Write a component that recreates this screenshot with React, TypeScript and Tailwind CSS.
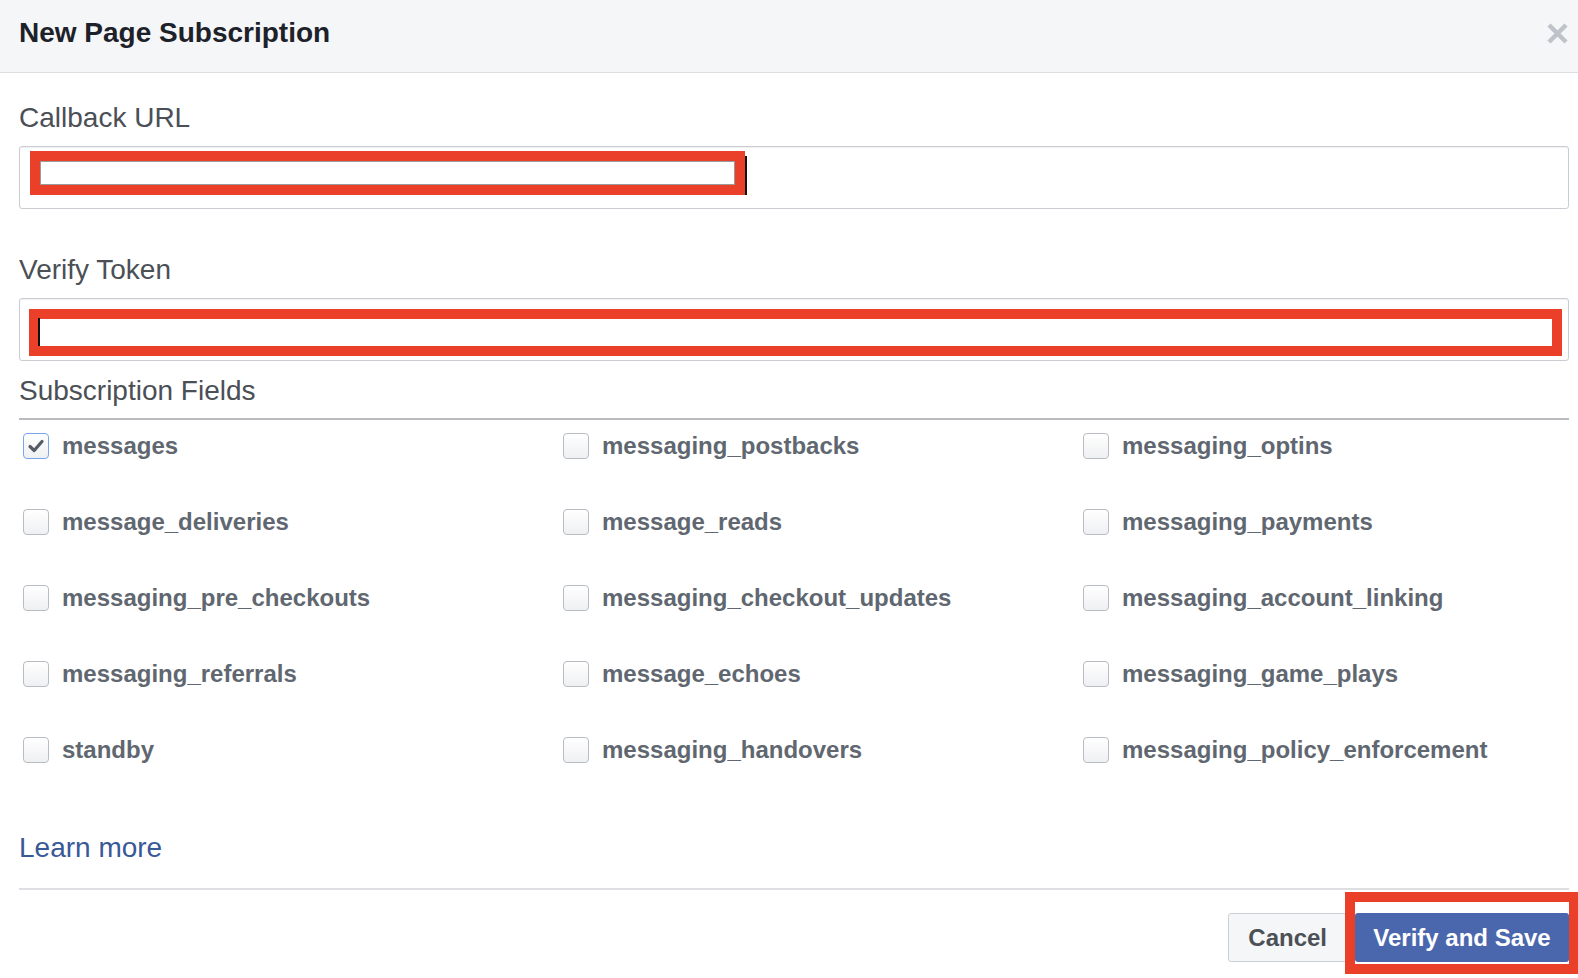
import React from "react";

const fields: [string, boolean][] = [
  ["messages", true],
  ["messaging_postbacks", false],
  ["messaging_optins", false],
  ["message_deliveries", false],
  ["message_reads", false],
  ["messaging_payments", false],
  ["messaging_pre_checkouts", false],
  ["messaging_checkout_updates", false],
  ["messaging_account_linking", false],
  ["messaging_referrals", false],
  ["message_echoes", false],
  ["messaging_game_plays", false],
  ["standby", false],
  ["messaging_handovers", false],
  ["messaging_policy_enforcement", false],
];

function Checkbox({ checked }: { checked: boolean }) {
  return (
    <div
      className={
        "w-[26px] h-[26px] shrink-0 rounded-[4px] border bg-gradient-to-b from-white to-[#eff0f2] flex items-center justify-center " +
        (checked ? "border-[#7aa5ee]" : "border-[#b9bdc3]")
      }
    >
      {checked && (
        <svg width="20" height="20" viewBox="0 0 20 20">
          <path d="M4 10.5 L8.2 14.5 L16 5.5" fill="none" stroke="#555b66" strokeWidth="3.2" strokeLinecap="round" strokeLinejoin="round" />
        </svg>
      )}
    </div>
  );
}

export default function App() {
  return (
    <div
      className="w-[1578px] h-[978px] overflow-hidden bg-white"
      style={{ fontFamily: '"Liberation Sans", Arial, Helvetica, sans-serif' }}
    >
      <div className="h-[73px] bg-[#f5f6f7] border-b border-[#dddfe2] flex items-start justify-between pl-[19px] pr-[10px] pt-[15px]">
        <div className="text-[28px] leading-[36px] font-bold text-[#1d2129]">New Page Subscription</div>
        <svg width="21" height="21" viewBox="0 0 21 21" className="mt-[8px]">
          <path d="M2 2 L19 19 M19 2 L2 19" stroke="#bec2c9" strokeWidth="4.5" strokeLinecap="butt" />
        </svg>
      </div>

      <div className="pl-[19px] pr-[9px]">
        <div className="mt-[27px] text-[28px] leading-[36px] text-[#4b4f56]">Callback URL</div>
        <div className="mt-[10px] h-[63px] border border-[#c9ccd1] rounded-[3px] relative shadow-[inset_0_1px_1px_rgba(0,0,0,0.06)]">
          <div className="absolute left-[10px] top-[4px] w-[715px] h-[44px] border-[10px] border-[#ea3f28]">
            <div className="w-full h-full border border-[#9a9a9a]" />
          </div>
          <div className="absolute left-[725px] top-[9px] w-[2px] h-[39px] bg-[#111]" />
        </div>

        <div className="mt-[43px] text-[28px] leading-[36px] text-[#4b4f56]">Verify Token</div>
        <div className="mt-[10px] h-[63px] border border-[#c9ccd1] rounded-[3px] relative shadow-[inset_0_1px_1px_rgba(0,0,0,0.06)]">
          <div className="absolute left-[9px] top-[10px] w-[1533px] h-[47px] border-[10px] border-[#ea3f28]" />
          <div className="absolute left-[18px] top-[19px] w-[2px] h-[28px] bg-[#111]" />
        </div>

        <div className="mt-[12px] text-[28px] leading-[36px] text-[#4b4f56]">Subscription Fields</div>
        <div className="mt-[9px] h-[2px] bg-[#b9bbbe]" />

        <div className="mt-[13px] pl-[4px] grid grid-cols-[540px_520px_1fr] gap-y-[50px]">
          {fields.map(([name, checked]) => (
            <div key={name} className="flex items-center h-[26px] gap-[13px]">
              <Checkbox checked={checked} />
              <span className="text-[24px] leading-[26px] font-bold text-[#606770]">{name}</span>
            </div>
          ))}
        </div>

        <div className="mt-[67px] text-[28px] leading-[36px] text-[#385898]">Learn more</div>
        <div className="mt-[22px] h-[2px] bg-[#dddfe2]" />

        <div className="mt-[23px] flex justify-end gap-[8px]">
          <button className="h-[49px] px-[19px] rounded-[3px] border border-[#ccd0d5] bg-[#f5f6f7] text-[24px] font-bold text-[#4b4f56]">
            Cancel
          </button>
          <div className="relative">
            <button className="h-[49px] w-[214px] rounded-[3px] bg-[#4a67ad] text-[24px] font-bold text-white">
              Verify and Save
            </button>
            <div className="absolute -top-[21px] -left-[10px] -right-[10px] -bottom-[12px] border-[10px] border-[#ea3f28] pointer-events-none" />
          </div>
        </div>
      </div>
    </div>
  );
}
